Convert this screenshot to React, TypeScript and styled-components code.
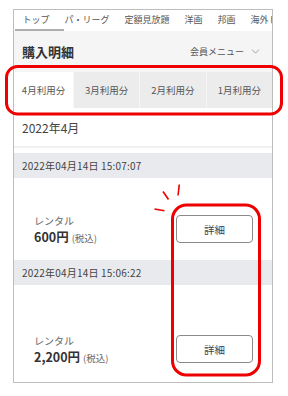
import styled, { createGlobalStyle } from 'styled-components';
import { ChevronDown } from 'lucide-react';

const GlobalStyle = createGlobalStyle`
  html, body {
    margin: 0;
    padding: 0;
    background: #ffffff;
  }
  body {
    font-family: "Noto Sans CJK JP", "Noto Sans", sans-serif;
    color: #333;
  }
`;

const navItems = ['トップ', 'パ・リーグ', '定額見放題', '洋画', '邦画', '海外ドラマ'];
const tabs = ['4月利用分', '3月利用分', '2月利用分', '1月利用分'];

const purchases = [
  { date: '2022年04月14日 15:07:07', title: 'レンタル', price: '600円', padTop: 37, height: 82 },
  { date: '2022年04月14日 15:06:22', title: 'レンタル', price: '2,200円', padTop: 50, height: 100 },
];

const App = () => {
  return (
    <Page>
      <GlobalStyle />
      <Frame>
        <Nav>
          {navItems.map((item, i) => (
            <NavItem key={item} $active={i === 0}>
              {item}
            </NavItem>
          ))}
        </Nav>
        <Header>
          <Title>購入明細</Title>
          <MemberMenu>
            会員メニュー
            <ChevronDown size={13} strokeWidth={1.2} />
          </MemberMenu>
        </Header>
        <Tabs>
          {tabs.map((t, i) => (
            <Tab key={t} $active={i === 0}>
              {t}
            </Tab>
          ))}
        </Tabs>
        <Month>2022年4月</Month>
        <Divider />
        {purchases.map((p) => (
          <div key={p.date}>
            <DateBar>{p.date}</DateBar>
            <Item $padTop={p.padTop} $height={p.height}>
              <ItemText>
                <ItemTitle>{p.title}</ItemTitle>
                <Price>
                  {p.price}
                  <Tax>(税込)</Tax>
                </Price>
              </ItemText>
              <DetailButton>詳細</DetailButton>
            </Item>
          </div>
        ))}
      </Frame>
      <Marks viewBox="0 0 288 396" width="288" height="396">
        <rect x="6.5" y="66.5" width="275" height="47.5" rx="11" />
        <rect x="172.5" y="205" width="87" height="170" rx="14" />
        <line x1="163" y1="191.5" x2="168.5" y2="199.5" />
        <line x1="179.3" y1="184.5" x2="178" y2="195.5" />
        <line x1="154.5" y1="209" x2="164.5" y2="210.8" />
      </Marks>
    </Page>
  );
};

const Page = styled.div`
  position: relative;
  width: 288px;
  height: 396px;
  overflow: hidden;
  padding: 9px 0 0 13px;
  box-sizing: border-box;
`;

const Frame = styled.div`
  width: 260px;
  height: 374px;
  box-sizing: border-box;
  border: 1px solid #bdbdbd;
  overflow: hidden;
  background: #fff;
`;

const Nav = styled.div`
  display: flex;
  height: 21px;
  padding-left: 1px;
  white-space: nowrap;
  overflow: hidden;
  background: #fff;
`;

const NavItem = styled.div<{ $active?: boolean }>`
  position: relative;
  flex: none;
  padding: 0 7.5px;
  font-size: 9px;
  line-height: 19px;
  color: #555;

  &::after {
    content: '';
    display: ${(p) => (p.$active ? 'block' : 'none')};
    position: absolute;
    left: 0;
    bottom: 0;
    width: 49px;
    height: 2px;
    background: #aeaeae;
  }
`;

const Header = styled.div`
  display: flex;
  align-items: center;
  justify-content: space-between;
  height: 41px;
  padding: 0 10px 0 8px;
  background: #f5f5f5;
`;

const Title = styled.h1`
  margin: 0;
  font-size: 13px;
  font-weight: 700;
  color: #333;
`;

const MemberMenu = styled.div`
  display: flex;
  align-items: center;
  gap: 5px;
  font-size: 9px;
  color: #555;

  svg {
    color: #777;
  }
`;

const Tabs = styled.div`
  display: flex;
  gap: 1px;
  height: 36px;
  background: #f6f6f6;
`;

const Tab = styled.div<{ $active?: boolean }>`
  flex: ${(p) => (p.$active ? '0 0 59px' : '1 1 0')};
  display: flex;
  align-items: center;
  justify-content: center;
  font-size: 9.5px;
  color: #555;
  background: ${(p) => (p.$active ? '#fff' : '#ececec')};
`;

const Month = styled.div`
  height: 38px;
  padding: 0 0 0 8px;
  display: flex;
  align-items: center;
  font-size: 12px;
  color: #444;
`;

const Divider = styled.div`
  height: 2px;
  margin-bottom: 5px;
  background: #f0f0f0;
`;

const DateBar = styled.div`
  height: 25px;
  display: flex;
  align-items: center;
  padding-left: 8px;
  font-size: 10px;
  letter-spacing: 0.2px;
  color: #444;
  background: #e9eaed;
`;

const Item = styled.div<{ $padTop: number; $height: number }>`
  box-sizing: border-box;
  height: ${(p) => p.$height}px;
  padding: ${(p) => p.$padTop}px 19px 0 20px;
  display: flex;
  align-items: flex-start;
  justify-content: space-between;
`;

const ItemText = styled.div`
  display: flex;
  flex-direction: column;
  margin-top: -1px;
`;

const ItemTitle = styled.div`
  font-size: 10px;
  line-height: 14px;
  color: #666;
`;

const Price = styled.div`
  font-size: 12.5px;
  line-height: 17px;
  font-weight: 700;
  color: #333;
`;

const Tax = styled.span`
  margin-left: 3px;
  font-size: 9.5px;
  font-weight: 400;
  color: #666;
`;

const DetailButton = styled.button`
  width: 77px;
  height: 28px;
  border: 1px solid #8a8a8a;
  border-radius: 4px;
  background: #fff;
  font-family: inherit;
  font-size: 10.5px;
  color: #444;
  padding: 0;
`;

const Marks = styled.svg`
  position: absolute;
  left: 0;
  top: 0;
  pointer-events: none;
  fill: none;
  stroke: #ee0000;
  stroke-width: 3;
  stroke-linecap: butt;

  line {
    stroke-width: 1.6;
  }
`;

export default App;
